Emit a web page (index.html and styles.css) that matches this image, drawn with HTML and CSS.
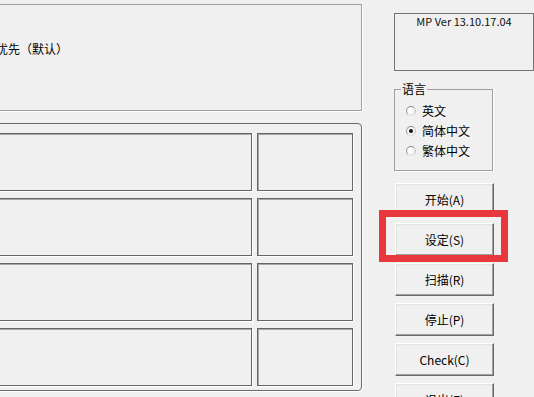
FILE: index.html
```html
<!DOCTYPE html>
<html lang="zh-CN">
<head>
<meta charset="utf-8">
<title>MP</title>
<link rel="stylesheet" href="styles.css">
</head>
<body>
<div class="window">
  <div class="left">
    <div class="mode-box">
      <div class="mode-option">优先（默认）</div>
    </div>
    <div class="group">
      <div class="cell"></div><div class="cell"></div>
      <div class="cell"></div><div class="cell"></div>
      <div class="cell"></div><div class="cell"></div>
      <div class="cell"></div><div class="cell"></div>
    </div>
  </div>
  <div class="right">
    <div class="version">MP Ver 13.10.17.04</div>
    <fieldset class="lang">
      <legend>语言</legend>
      <label class="radio"><span class="circle"></span>英文</label>
      <label class="radio"><span class="circle checked"></span>简体中文</label>
      <label class="radio"><span class="circle"></span>繁体中文</label>
    </fieldset>
    <div class="buttons">
      <button class="btn">开始(A)</button>
      <button class="btn">设定(S)</button>
      <button class="btn">扫描(R)</button>
      <button class="btn">停止(P)</button>
      <button class="btn">Check(C)</button>
      <button class="btn">退出(E)</button>
    </div>
  </div>
  <div class="highlight"></div>
</div>
</body>
</html>
```

FILE: styles.css
```css
html, body {
  margin: 0;
  padding: 0;
  background: #f0f0f0;
}

body {
  font-family: "Noto Sans CJK SC", "Liberation Sans", sans-serif;
  font-size: 12px;
  color: #000;
}

.window {
  position: relative;
  width: 534px;
  height: 397px;
  overflow: hidden;
  display: flex;
  align-items: flex-start;
  background: #f0f0f0;
}

.left {
  margin-left: -20px;
  width: 382px;
  flex: none;
  display: flex;
  flex-direction: column;
}

.mode-box {
  flex: none;
  margin-top: 4px;
  height: 107px;
  box-sizing: border-box;
  border: 1px solid #a0a0a0;
  box-shadow: 1px 1px 0 #ffffff;
  padding: 36px 0 0 15px;
}

.mode-option {
  line-height: 16px;
  white-space: nowrap;
}

.group {
  flex: none;
  margin-top: 12px;
  height: 268px;
  box-sizing: border-box;
  border: 1px solid #6a6a6a;
  border-radius: 4px;
  box-shadow: 1px 1px 0 #ffffff;
  padding: 9px 8px 0 6px;
  display: grid;
  grid-template-columns: 1fr 96px;
  grid-auto-rows: 58px;
  column-gap: 5px;
  row-gap: 7px;
}

.cell {
  box-sizing: border-box;
  border: 1px solid #666666;
  box-shadow: inset 1px 1px 0 #a8a8a8, 1px 1px 0 #ffffff;
}

.right {
  flex: none;
  padding-left: 32px;
  width: 140px;
  display: flex;
  flex-direction: column;
}

.version {
  flex: none;
  margin-top: 13px;
  height: 58px;
  box-sizing: border-box;
  border: 1px solid #737373;
  text-align: center;
  font-size: 11px;
  line-height: 12px;
  padding-top: 1px;
  color: #111;
}

.lang {
  flex: none;
  margin: 11px 0 0 0;
  width: 99px;
  box-sizing: border-box;
  border: 1px solid #a0a0a0;
  box-shadow: 1px 1px 0 #ffffff;
  padding: 5px 0 9px 6px;
  min-width: 0;
}

.lang legend {
  padding: 0 1px;
  line-height: 14px;
  font-size: 12px;
}

.radio {
  display: flex;
  align-items: center;
  height: 20px;
  padding-left: 5px;
  line-height: 20px;
  white-space: nowrap;
}

.circle {
  width: 10px;
  height: 10px;
  box-sizing: border-box;
  border-radius: 50%;
  border: 1px solid;
  border-color: #8e8e8e #c4c4c4 #dcdcdc #9a9a9a;
  background: radial-gradient(circle at 40% 40%, #ffffff 0%, #f4f4f4 55%, #dcdcdc 100%);
  margin-right: 6px;
  flex: none;
  display: flex;
  align-items: center;
  justify-content: center;
}

.circle.checked::after {
  content: "";
  width: 4px;
  height: 4px;
  border-radius: 50%;
  background: #111;
}

.buttons {
  flex: none;
  margin-top: 12px;
  display: flex;
  flex-direction: column;
  gap: 7px;
  padding-left: 1px;
}

.btn {
  width: 99px;
  height: 33px;
  flex: none;
  box-sizing: border-box;
  margin: 0;
  padding: 0;
  background: #f0f0f0;
  border-style: solid;
  border-width: 1px;
  border-color: #ffffff #696969 #696969 #ffffff;
  box-shadow: inset -1px -1px 0 #a0a0a0, inset 1px 1px 0 #e3e3e3;
  font-family: "Noto Sans CJK SC", "Liberation Sans", sans-serif;
  font-size: 12px;
  line-height: 16px;
  color: #000;
}

.highlight {
  position: absolute;
  left: 379px;
  top: 210px;
  width: 129px;
  height: 52px;
  box-sizing: border-box;
  border: 7px solid #e8383b;
}
```
